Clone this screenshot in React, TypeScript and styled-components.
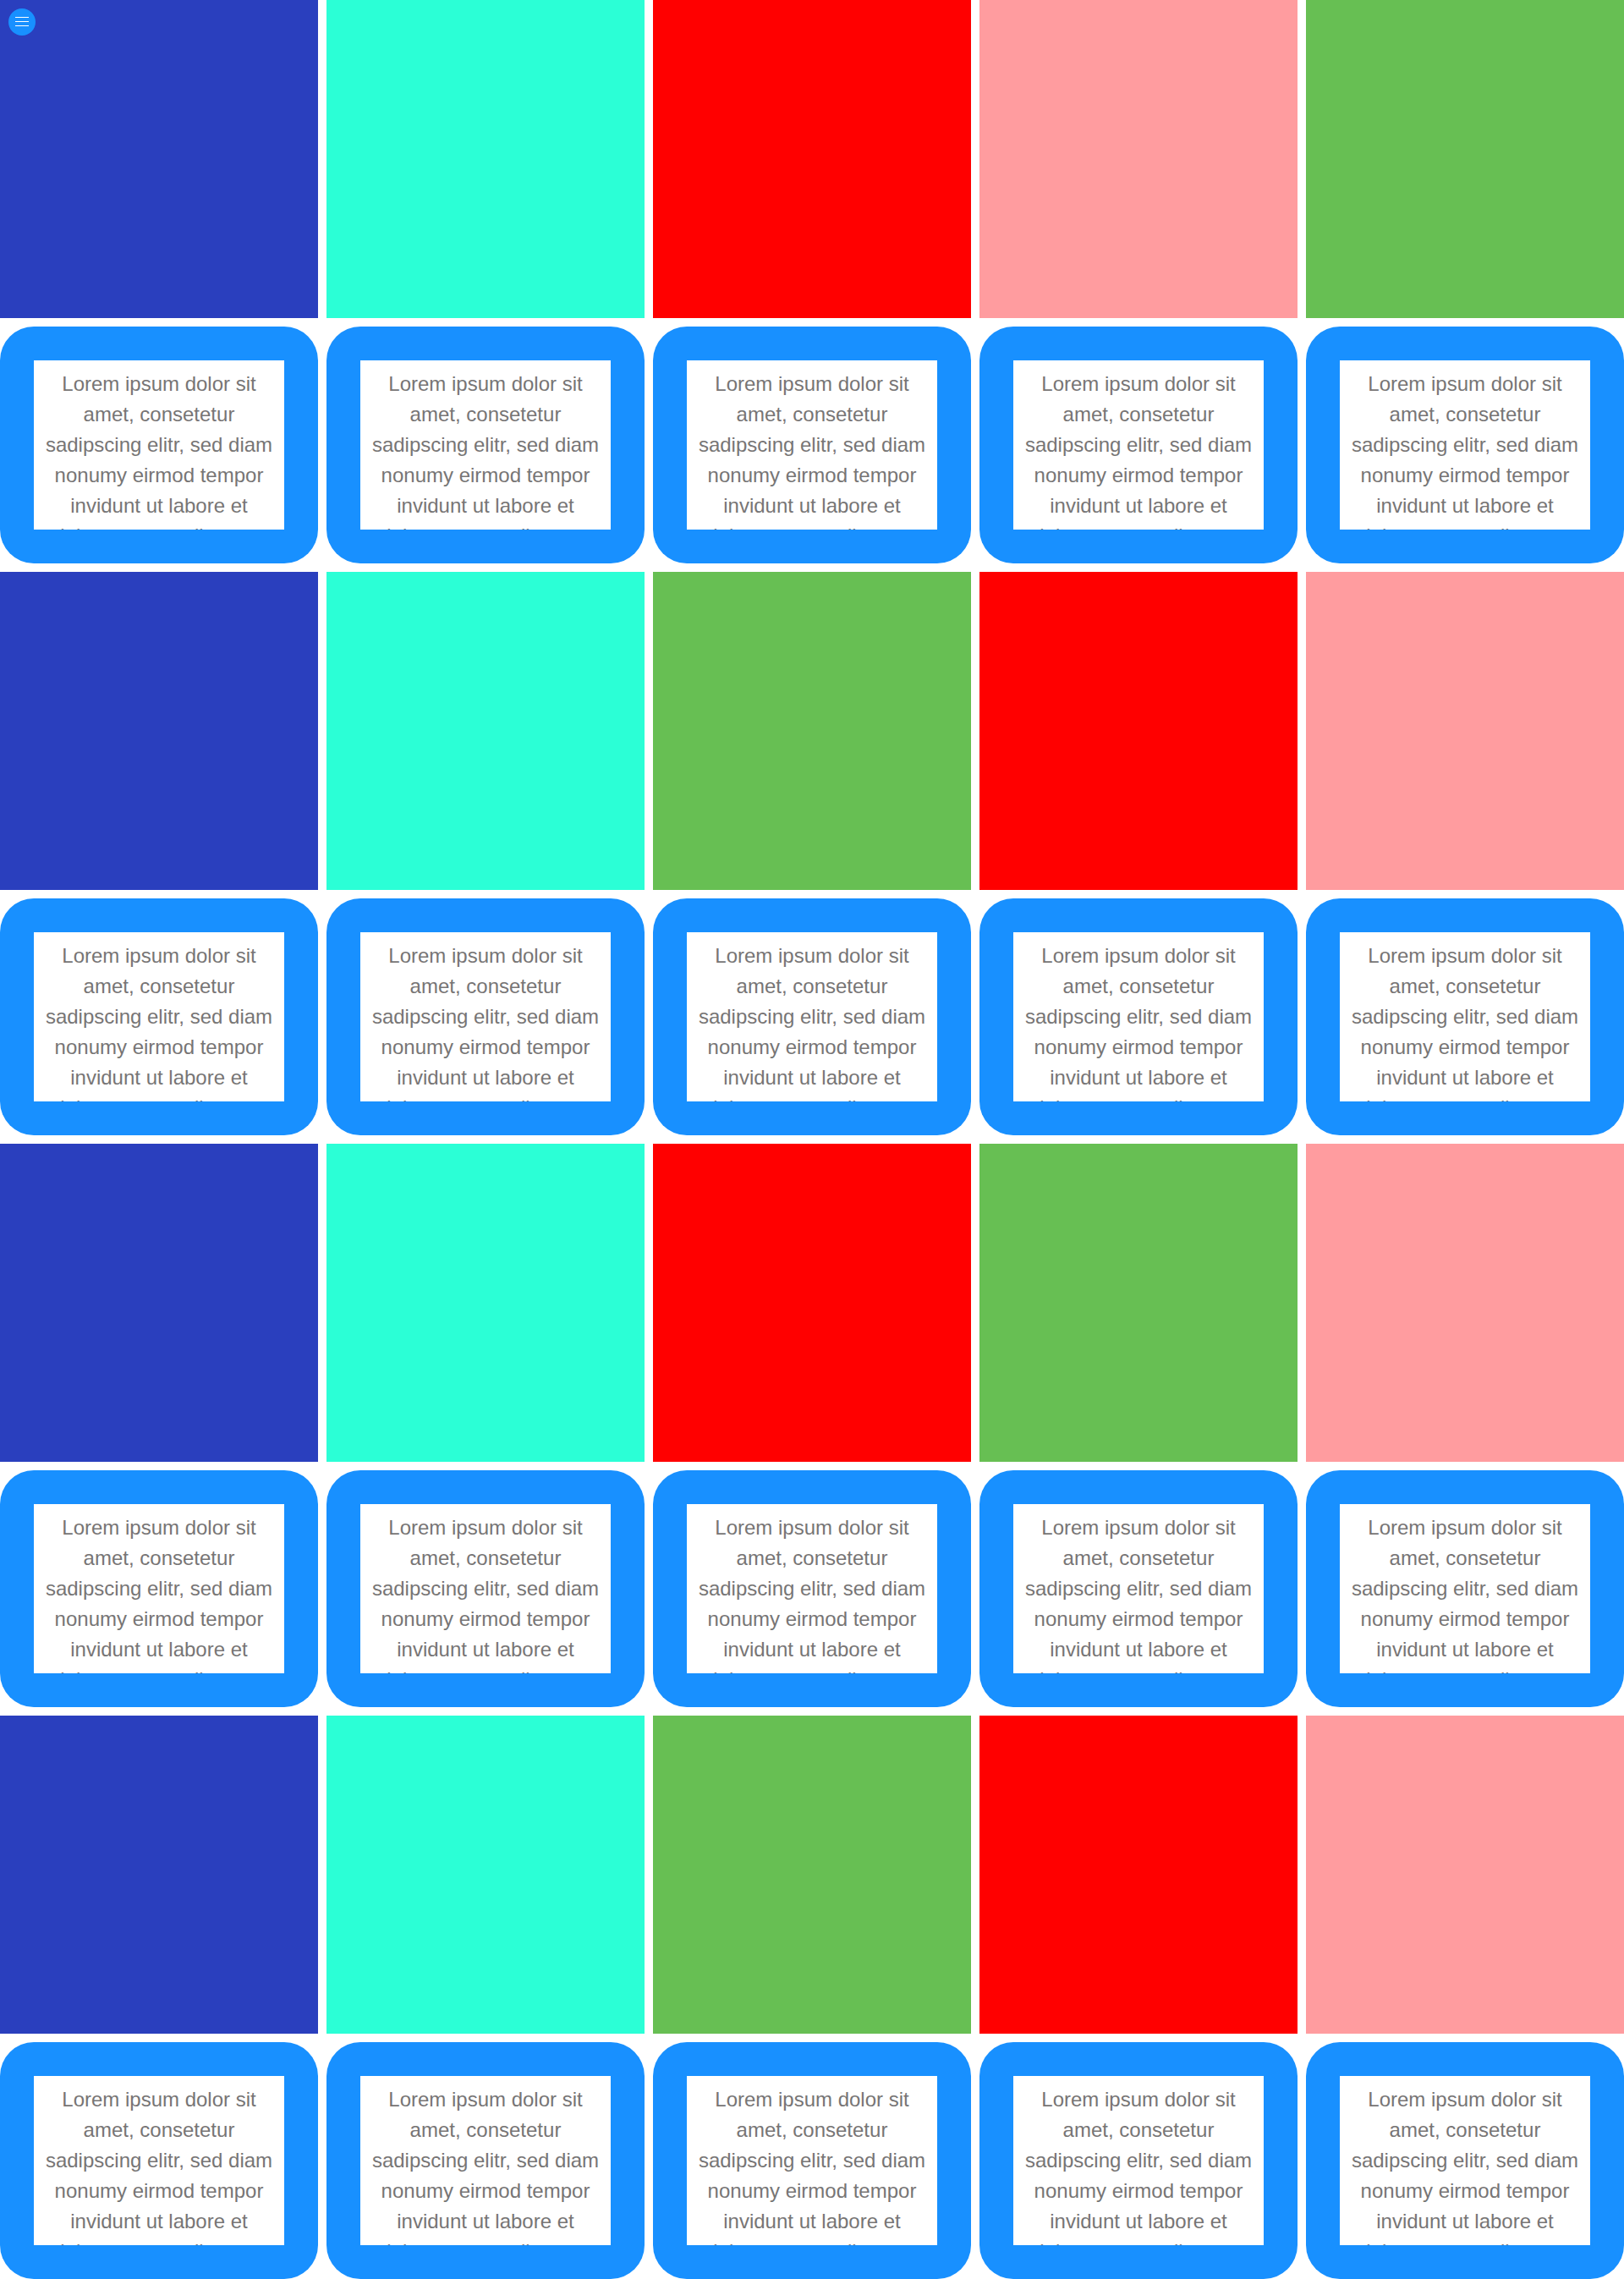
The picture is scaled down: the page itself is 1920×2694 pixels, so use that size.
import React from "react";
import styled, { createGlobalStyle } from "styled-components";

const GlobalStyle = createGlobalStyle`
  html, body {
    margin: 0;
    padding: 0;
    background: #ffffff;
  }
`;

const COLORS = {
  blue: "#2a3fbe",
  aqua: "#2bffd6",
  red: "#ff0000",
  pink: "#ff9c9f",
  green: "#67bf53",
};

type ColorName = keyof typeof COLORS;

const ROWS: ColorName[][] = [
  ["blue", "aqua", "red", "pink", "green"],
  ["blue", "aqua", "green", "red", "pink"],
  ["blue", "aqua", "red", "green", "pink"],
  ["blue", "aqua", "green", "red", "pink"],
];

const LOREM =
  "Lorem ipsum dolor sit amet, consetetur sadipscing elitr, sed diam nonumy eirmod tempor invidunt ut labore et dolore magna aliquyam erat, sed diam voluptua.";

const Page = styled.main`
  position: relative;
  width: 1920px;
  display: grid;
  grid-template-columns: repeat(5, 376px);
  gap: 10px;
`;

const Swatch = styled.div<{ $color: ColorName }>`
  height: 376px;
  background: ${({ $color }) => COLORS[$color]};
`;

const Card = styled.article`
  height: 280px;
  box-sizing: border-box;
  padding: 40px;
  border-radius: 40px;
  background: #1890ff;
`;

const CardText = styled.p`
  margin: 0;
  height: 200px;
  overflow: hidden;
  padding: 10px 10px 0;
  box-sizing: border-box;
  background: #ffffff;
  color: #777575;
  font-family: "Liberation Sans", Arial, sans-serif;
  font-size: 24px;
  line-height: 36px;
  text-align: center;
`;

const MenuButton = styled.button`
  position: absolute;
  top: 10px;
  left: 10px;
  width: 32px;
  height: 32px;
  padding: 10px 0 0;
  box-sizing: border-box;
  border: none;
  border-radius: 50%;
  background: #1890ff;
  display: flex;
  flex-direction: column;
  align-items: center;
  gap: 4px;
`;

const MenuLine = styled.span`
  width: 16px;
  height: 1px;
  background: #ffffff;
`;

export default function App() {
  return (
    <>
      <GlobalStyle />
      <Page>
        {ROWS.map((row, i) => (
          <React.Fragment key={i}>
            {row.map((color, j) => (
              <Swatch key={j} $color={color} />
            ))}
            {row.map((_, j) => (
              <Card key={j}>
                <CardText>{LOREM}</CardText>
              </Card>
            ))}
          </React.Fragment>
        ))}
        <MenuButton aria-label="menu">
          <MenuLine />
          <MenuLine />
          <MenuLine />
        </MenuButton>
      </Page>
    </>
  );
}
